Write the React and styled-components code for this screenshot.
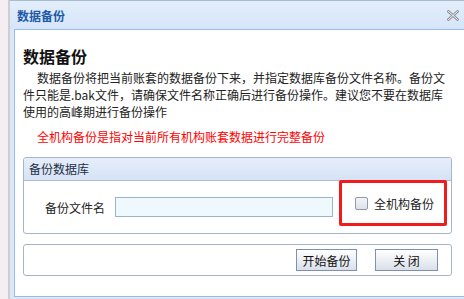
import React from "react";
import styled, { createGlobalStyle } from "styled-components";

const Global = createGlobalStyle`
  html, body { margin: 0; padding: 0; background: #f3eff3; }
  body { font-family: "Noto Sans CJK SC", "Noto Sans", sans-serif; font-size: 12px; color: #222; }
`;

const Page = styled.div`
  display: flex;
  width: 464px;
  height: 299px;
  overflow: hidden;
`;

const Backdrop = styled.div`
  width: 8px;
  background: #f4eef3;
  border-right: 2px solid #cfcdd2;
  flex: none;
`;

const Win = styled.div`
  flex: 1;
  min-width: 0;
  display: flex;
  flex-direction: column;
  background: #d9e7f8;
  border-top: 1px solid #a9bbd1;
`;

const TitleBar = styled.div`
  height: 28px;
  flex: none;
  display: flex;
  align-items: center;
  justify-content: space-between;
  padding: 0 5px 0 7px;
  background: linear-gradient(#e3eefb, #d5e5f9);
`;

const Title = styled.div`
  color: #1e5aa8;
  font-weight: bold;
  font-size: 12px;
`;

const Body = styled.div`
  flex: 1;
  min-width: 0;
  margin-left: 4px;
  margin-bottom: 2px;
  background: #fff;
  border-left: 1px solid #99bbe8;
  border-top: 1px solid #99bbe8;
  border-bottom: 1px solid #99bbe8;
  padding: 15px 12px 0 8px;
  display: flex;
  flex-direction: column;
  overflow: hidden;
`;

const Heading = styled.div`
  font-size: 16px;
  font-weight: bold;
  color: #111;
  line-height: 22px;
`;

const Para = styled.p`
  margin: 2px 0 0;
  font-size: 12px;
  line-height: 17px;
  color: #222;
  white-space: nowrap;
`;

const Indent = styled.span`
  display: inline-block;
  width: 14px;
`;

const Warn = styled.p`
  margin: 8px 0 0;
  padding-left: 14px;
  font-size: 12px;
  line-height: 17px;
  color: #ff0000;
  white-space: nowrap;
`;

const Panel = styled.div`
  margin-top: ${(p) => p.$top}px;
  border: 1px solid #a7b5c8;
  border-radius: 3px;
  overflow: visible;
`;

const PanelHead = styled.div`
  height: 22px;
  line-height: 22px;
  padding-left: 5px;
  font-size: 12px;
  color: #1f2f44;
  background: linear-gradient(#e6eefa, #d6e3f5);
  border-bottom: 1px solid #a9bcd6;
  border-radius: 3px 3px 0 0;
`;

const FormRow = styled.div`
  height: 52px;
  display: flex;
  align-items: center;
  padding-left: 21px;
`;

const Label = styled.span`
  font-size: 12px;
  color: #222;
  width: 70px;
  white-space: nowrap;
`;

const Input = styled.div`
  width: 216px;
  height: 18px;
  border: 1px solid #9ab3cc;
  background: #eef8fd;
`;

const Highlight = styled.div`
  margin-left: 6px;
  width: 108px;
  height: 46px;
  align-self: flex-start;
  margin-top: -1px;
  border: 3px solid #f01b1b;
  border-radius: 2px;
  display: flex;
  align-items: center;
  padding-left: 13px;
  box-sizing: border-box;
  gap: 6px;
  white-space: nowrap;
`;

const Check = styled.span`
  width: 11px;
  height: 11px;
  flex: none;
  border: 1px solid #8f9bab;
  border-radius: 2px;
  background: linear-gradient(#f2f4f7, #dde2ea);
`;

const CheckLabel = styled.span`
  font-size: 12px;
  color: #222;
`;

const BtnBar = styled.div`
  height: 30px;
  display: flex;
  justify-content: flex-end;
  align-items: center;
  gap: 18px;
  padding-right: 13px;
`;

const Button = styled.div`
  width: ${(p) => p.$w}px;
  height: 22px;
  display: flex;
  align-items: center;
  justify-content: center;
  font-size: 12px;
  color: #111;
  border: 1px solid #8190a8;
  background: linear-gradient(#ffffff, #e9ecf2 60%, #d9dfea);
  box-sizing: border-box;
  white-space: pre;
`;

const Close = () => (
  <svg width="12" height="11" viewBox="0 0 12 11">
    <path d="M1.5 1.5 L10.5 9.5 M10.5 1.5 L1.5 9.5" stroke="#8a8f96" strokeWidth="2.6" strokeLinecap="square" />
    <path d="M1.5 1.5 L10.5 9.5 M10.5 1.5 L1.5 9.5" stroke="#f3f5f8" strokeWidth="1" strokeLinecap="square" />
  </svg>
);

export default function App() {
  return (
    <Page>
      <Global />
      <Backdrop />
      <Win>
        <TitleBar>
          <Title>数据备份</Title>
          <Close />
        </TitleBar>
        <Body>
          <Heading>数据备份</Heading>
          <Para>
            <Indent />
            数据备份将把当前账套的数据备份下来，并指定数据库备份文件名称。备份文
            <br />
            件只能是.bak文件，请确保文件名称正确后进行备份操作。建议您不要在数据库
            <br />
            使用的高峰期进行备份操作
          </Para>
          <Warn>全机构备份是指对当前所有机构账套数据进行完整备份</Warn>
          <Panel $top={12}>
            <PanelHead>备份数据库</PanelHead>
            <FormRow>
              <Label>备份文件名</Label>
              <Input />
              <Highlight>
                <Check />
                <CheckLabel>全机构备份</CheckLabel>
              </Highlight>
            </FormRow>
          </Panel>
          <Panel $top={10}>
            <BtnBar>
              <Button $w={61}>开始备份</Button>
              <Button $w={63}>关 闭</Button>
            </BtnBar>
          </Panel>
        </Body>
      </Win>
    </Page>
  );
}
